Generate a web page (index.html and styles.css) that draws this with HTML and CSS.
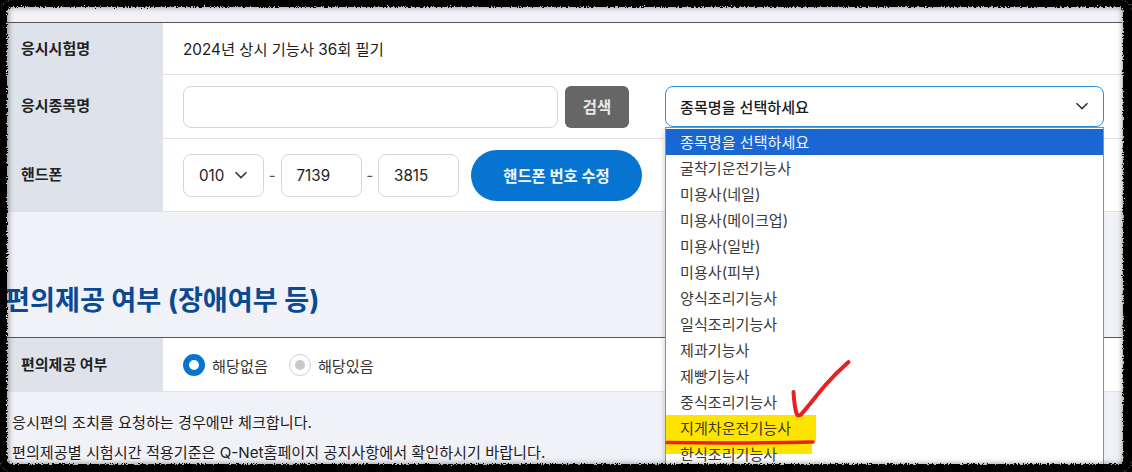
FILE: index.html
```html
<!DOCTYPE html>
<html lang="ko">
<head>
<meta charset="utf-8">
<title>응시 정보</title>
<link rel="stylesheet" href="styles.css">
</head>
<body>
<div class="shot">
  <section class="table first">
    <div class="row r1">
      <div class="th">응시시험명</div>
      <div class="td">2024년 상시 기능사 36회 필기</div>
    </div>
    <div class="row r2">
      <div class="th">응시종목명</div>
      <div class="td search">
        <div class="field wide"></div>
        <div class="btn-gray">검색</div>
        <div class="select-main">
          <span>종목명을 선택하세요</span>
          <svg class="chev" width="14" height="8" viewBox="0 0 14 8"><path d="M1.5 1.2 7 6.6l5.5-5.4" /></svg>
        </div>
      </div>
    </div>
    <div class="row r3">
      <div class="th">핸드폰</div>
      <div class="td phone">
        <div class="field sel">
          <span>010</span>
          <svg class="chev" width="14" height="8" viewBox="0 0 14 8"><path d="M1.5 1.2 7 6.6l5.5-5.4" /></svg>
        </div>
        <span class="dash">-</span>
        <div class="field num">7139</div>
        <span class="dash">-</span>
        <div class="field num">3815</div>
        <div class="btn-blue">핸드폰 번호 수정</div>
      </div>
    </div>
  </section>

  <h2 class="title">편의제공 여부 (장애여부 등)</h2>

  <section class="table">
    <div class="row r4">
      <div class="th">편의제공 여부</div>
      <div class="td radios">
        <span class="radio on"></span><span class="rlabel">해당없음</span>
        <span class="radio off"></span><span class="rlabel">해당있음</span>
      </div>
    </div>
  </section>

  <p class="note n1">응시편의 조치를 요청하는 경우에만 체크합니다.</p>
  <p class="note n2">편의제공별 시험시간 적용기준은 Q-Net홈페이지 공지사항에서 확인하시기 바랍니다.</p>

  <div class="menu">
    <span class="mark m1"></span>
    <span class="mark m2"></span>
    <div class="opt active">종목명을 선택하세요</div>
    <div class="opt">굴착기운전기능사</div>
    <div class="opt">미용사(네일)</div>
    <div class="opt">미용사(메이크업)</div>
    <div class="opt">미용사(일반)</div>
    <div class="opt">미용사(피부)</div>
    <div class="opt">양식조리기능사</div>
    <div class="opt">일식조리기능사</div>
    <div class="opt">제과기능사</div>
    <div class="opt">제빵기능사</div>
    <div class="opt">중식조리기능사</div>
    <div class="opt">지게차운전기능사</div>
    <div class="opt">한식조리기능사</div>
  </div>

  <svg class="scribble" width="1132" height="472" viewBox="0 0 1132 472" aria-hidden="true">
    <path class="red" d="M793.5 392c.5 8 1 15 3 21.500 1 2.500 3 2.500 5 .5 8-9 16-20 24-29 7-8 15-16 23-23" />
    <path class="red thin" d="M667 442.500c30 .5 100 .5 146-.5" />
  </svg>
</div>

<svg class="defs" width="0" height="0" aria-hidden="true">
  <filter id="torn" x="-2%" y="-2%" width="104%" height="104%">
    <feTurbulence type="fractalNoise" baseFrequency="0.7" numOctaves="2" seed="4" />
    <feDisplacementMap in="SourceGraphic" scale="5" xChannelSelector="R" yChannelSelector="G" />
  </filter>
</svg>
<div class="edge-shade"></div>
<div class="edge"></div>
</body>
</html>
```

FILE: styles.css
```css
* { box-sizing: border-box; }
html, body { margin: 0; height: 100%; }
body {
  width: 1132px;
  height: 472px;
  background: #fff;
  overflow: hidden;
  position: relative;
  font-family: Inter, "Noto Sans CJK KR", "Noto Sans", sans-serif;
  color: #1c1c1c;
  font-size: 15.200px;
}
.shot {
  position: relative;
  width: 1132px;
  height: 472px;
  padding: 22px 10px 0 0;
  background: #f0f2f7;
  overflow: hidden;
}
.table {
  border-top: 1px solid #565656;
  background: #fff;
}
.row {
  display: grid;
  grid-template-columns: 163px 1fr;
  border-bottom: 1px solid #e0e1e4;
}
.r1 { height: 52px; }
.r2 { height: 64px; }
.r3 { height: 73px; }
.r4 { height: 54px; }
.th {
  display: flex;
  align-items: center;
  padding-left: 21px;
  background: #dee2ea;
  font-weight: 700;
  font-size: 15px;
  color: #222;
}
.r1 .th { padding-bottom: 2px; }
.r2 .th { padding-bottom: 4px; }
.r3 .th { padding-bottom: 4px; }
.r4 .th { padding-bottom: 3px; }
.td {
  display: flex;
  align-items: center;
  padding-left: 20px;
}
.r1 .td { padding-bottom: 2px; font-size: 15.300px; }
.search { align-items: flex-start; padding-top: 11px; }
.field {
  display: flex;
  align-items: center;
  height: 43px;
  background: #fff;
  border: 1px solid #d6d6d6;
  border-radius: 8px;
}
.wide { width: 375px; height: 42px; }
.btn-gray {
  display: flex;
  align-items: center;
  justify-content: center;
  width: 64px;
  height: 42px;
  margin-left: 7px;
  padding-bottom: 2px;
  background: #666;
  border-radius: 6px;
  color: #e8e8e8;
  font-weight: 700;
  font-size: 15.500px;
}
.select-main {
  display: flex;
  align-items: center;
  justify-content: space-between;
  width: 439px;
  height: 41px;
  margin-left: 36px;
  padding: 0 14px 2px;
  border: 1px solid #2a8fe2;
  border-radius: 8px;
  background: #fff;
  font-size: 15.100px;
  font-weight: 500;
}
.chev { fill: none; stroke: #333; stroke-width: 1.500; }
.sel { width: 81px; padding: 0 15px; justify-content: space-between; }
.num { width: 81px; padding-left: 15px; }
.dash { width: 16.500px; text-align: center; color: #555; }
.btn-blue {
  display: flex;
  align-items: center;
  justify-content: center;
  width: 171px;
  height: 51px;
  margin-left: 12px;
  background: #0874d1;
  border-radius: 26px;
  color: #f4f8fc;
  font-weight: 700;
  font-size: 15.400px;
}
.title {
  margin: 0;
  height: 125px;
  padding: 69px 0 0 5px;
  font-size: 27.150px;
  line-height: 40px;
  font-weight: 700;
  color: #0a4a94;
  white-space: nowrap;
}
.radio {
  width: 22px;
  height: 22px;
  border-radius: 50%;
  flex: none;
  background: #fff;
}
.radio.on { border: 6px solid #0874d1; }
.radio.off { border: 1px solid #d0d0d0; margin-left: 21px; position: relative; }
.radio.off::after {
  content: "";
  position: absolute;
  left: 5px;
  top: 5px;
  width: 10px;
  height: 10px;
  border-radius: 50%;
  background: #c8c8c8;
}
.rlabel { margin-left: 7px; font-size: 15.200px; color: #333; }
.note { margin: 0; padding-left: 12px; font-size: 15.150px; line-height: 22px; white-space: nowrap; }
.n1 { margin-top: 20px; }
.n2 { margin-top: 8px; }

.menu {
  position: absolute;
  left: 665px;
  top: 127px;
  width: 439px;
  height: 340px;
  padding-top: 1px;
  background: #fff;
  border: 1px solid #8f8f8f;
  box-shadow: -2px 2px 4px rgba(0, 0, 0, .12);
}
.opt {
  position: relative;
  height: 26px;
  padding-left: 14px;
  font-size: 15.100px;
  line-height: 27px;
  color: #3a3a3a;
}
.opt.active { background: #1a66d2; color: #f2f6fc; }
.mark { position: absolute; left: 0; background: #ffe400; }
.m1 { top: 287px; width: 150px; height: 27px; }
.m2 { top: 313px; width: 146px; height: 13px; }
.scribble { position: absolute; left: 0; top: 0; pointer-events: none; }
.red { fill: none; stroke: #e8201f; stroke-width: 4; stroke-linecap: round; stroke-linejoin: round; }
.thin { stroke-width: 3.500; }
.defs { position: absolute; }
.edge-shade {
  position: absolute;
  inset: 6px 8px 7px 7px;
  border-radius: 6px;
  box-shadow: inset 0 0 5px 2px rgba(60, 60, 60, .45);
  pointer-events: none;
}
.edge {
  position: absolute;
  inset: 0;
  border-style: solid;
  border-color: #000;
  border-width: 7px 9px 8px 7px;
  border-radius: 12px;
  box-shadow: 0 0 0 8px #000;
  filter: url(#torn);
  pointer-events: none;
}
```
